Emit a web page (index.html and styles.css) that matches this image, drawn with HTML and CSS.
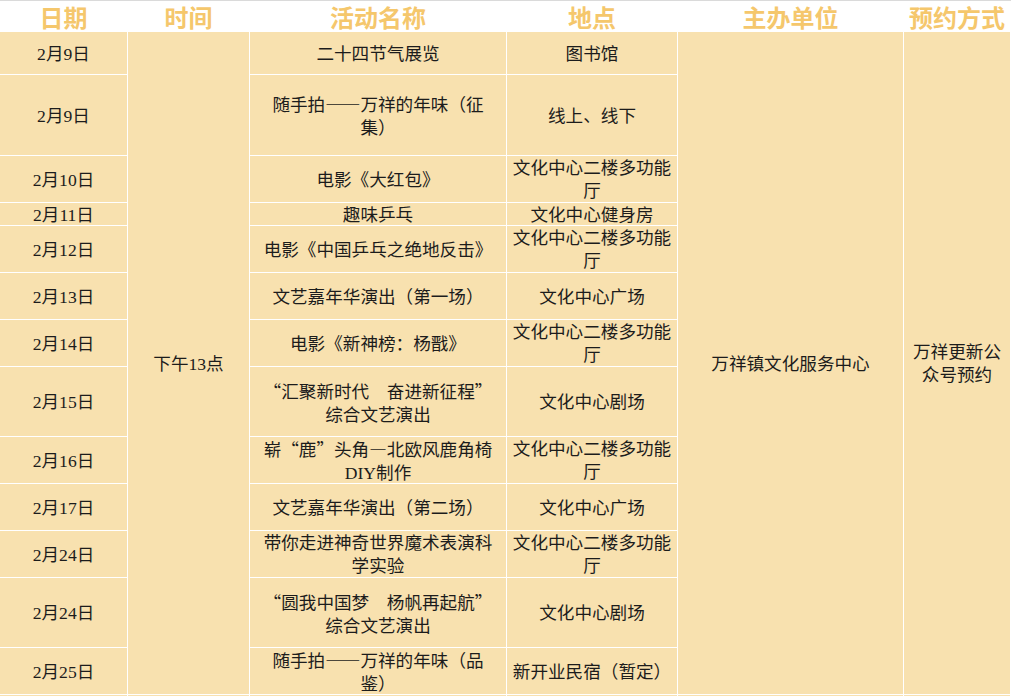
FILE: index.html
```html
<!DOCTYPE html>
<html lang="zh-CN">
<head>
<meta charset="utf-8">
<title>活动安排</title>
<link rel="stylesheet" href="styles.css">
</head>
<body>
<div class="sheet">
  <div class="head">
    <div class="hcell">日期</div>
    <div class="hcell">时间</div>
    <div class="hcell">活动名称</div>
    <div class="hcell">地点</div>
    <div class="hcell">主办单位</div>
    <div class="hcell">预约方式</div>
  </div>
  <div class="grid">
    <div class="cell"><span>2月9日</span></div>
    <div class="cell span"><span>下午13点</span></div>
    <div class="cell name"><span>二十四节气展览</span></div>
    <div class="cell"><span>图书馆</span></div>
    <div class="cell span"><span>万祥镇文化服务中心</span></div>
    <div class="cell span"><span>万祥更新公众号预约</span></div>

    <div class="cell"><span>2月9日</span></div>
    <div class="cell name"><span>随手拍<b class="q">——</b>万祥的年味（征<wbr>集）</span></div>
    <div class="cell"><span>线上、线下</span></div>

    <div class="cell"><span>2月10日</span></div>
    <div class="cell name"><span>电影《大红包》</span></div>
    <div class="cell"><span>文化中心二楼多功能厅</span></div>

    <div class="cell"><span>2月11日</span></div>
    <div class="cell name"><span>趣味乒乓</span></div>
    <div class="cell"><span>文化中心健身房</span></div>

    <div class="cell"><span>2月12日</span></div>
    <div class="cell name"><span>电影《中国乒乓之绝地反击》</span></div>
    <div class="cell"><span>文化中心二楼多功能厅</span></div>

    <div class="cell"><span>2月13日</span></div>
    <div class="cell name"><span>文艺嘉年华演出（第一场）</span></div>
    <div class="cell"><span>文化中心广场</span></div>

    <div class="cell"><span>2月14日</span></div>
    <div class="cell name"><span>电影《新神榜：杨戬》</span></div>
    <div class="cell"><span>文化中心二楼多功能厅</span></div>

    <div class="cell"><span>2月15日</span></div>
    <div class="cell name"><span><b class="q">“</b>汇聚新时代　奋进新征程<b class="q">”</b>综合文艺演出</span></div>
    <div class="cell"><span>文化中心剧场</span></div>

    <div class="cell"><span>2月16日</span></div>
    <div class="cell name cjk"><span>崭“鹿”头角—北欧风鹿角椅<b class="lat">DIY</b>制作</span></div>
    <div class="cell"><span>文化中心二楼多功能厅</span></div>

    <div class="cell"><span>2月17日</span></div>
    <div class="cell name"><span>文艺嘉年华演出（第二场）</span></div>
    <div class="cell"><span>文化中心广场</span></div>

    <div class="cell"><span>2月24日</span></div>
    <div class="cell name"><span>带你走进神奇世界魔术表演科学实验</span></div>
    <div class="cell"><span>文化中心二楼多功能厅</span></div>

    <div class="cell"><span>2月24日</span></div>
    <div class="cell name"><span><b class="q">“</b>圆我中国梦　杨帆再起航<b class="q">”</b>综合文艺演出</span></div>
    <div class="cell"><span>文化中心剧场</span></div>

    <div class="cell"><span>2月25日</span></div>
    <div class="cell name"><span>随手拍<b class="q">——</b>万祥的年味（品<wbr>鉴）</span></div>
    <div class="cell"><span>新开业民宿（暂定）</span></div>

    <div class="cell"></div>
    <div class="cell"></div>
    <div class="cell"></div>
    <div class="cell"></div>
    <div class="cell"></div>
    <div class="cell"></div>
  </div>
</div>
</body>
</html>
```

FILE: styles.css
```css
html, body {
  margin: 0;
  padding: 0;
  overflow: hidden;
  background: #ffffff;
}

.sheet {
  width: 1011px;
  height: 696px;
  overflow: hidden;
  font-family: "Liberation Serif", "Noto Sans CJK SC", serif;
}

.head {
  display: grid;
  grid-template-columns: 127px 121px 256px 170px 225px 106px;
  column-gap: 1px;
  height: 31px;
  border-top: 1px solid #dadada;
  background: #ffffff;
}

.hcell {
  display: flex;
  align-items: center;
  justify-content: center;
  font-family: "Noto Sans CJK SC", sans-serif;
  font-weight: 700;
  font-size: 24px;
  line-height: 31px;
  color: #f5c76c;
  white-space: nowrap;
}

.grid {
  display: grid;
  grid-template-columns: 127px 121px 256px 170px 225px 106px;
  grid-template-rows: 42px 80px 46px 22px 46px 46px 46px 69px 46px 46px 46px 69px 46px 1px;
  gap: 1px;
  padding-right: 1px;
  background: #ffffff;
}

.cell {
  display: flex;
  align-items: center;
  justify-content: center;
  text-align: center;
  padding: 2px 5px 0;
  background: #f8e1af;
  color: #1c1c1c;
  font-size: 17.6px;
  line-height: 23px;
  min-width: 0;
  text-spacing-trim: space-all;
  text-autospace: no-autospace;
}

.cell.name {
  padding-left: 6px;
  padding-right: 6px;
}

.cell.cjk {
  font-family: "Noto Sans CJK SC", sans-serif;
  font-feature-settings: "fwid";
}

.span {
  grid-row: span 13;
}

.q {
  font-weight: 400;
  font-family: "Noto Sans CJK SC", sans-serif;
  font-feature-settings: "fwid";
}

.lat {
  font-weight: 400;
  font-family: "Liberation Serif", serif;
  font-feature-settings: normal;
}
```
